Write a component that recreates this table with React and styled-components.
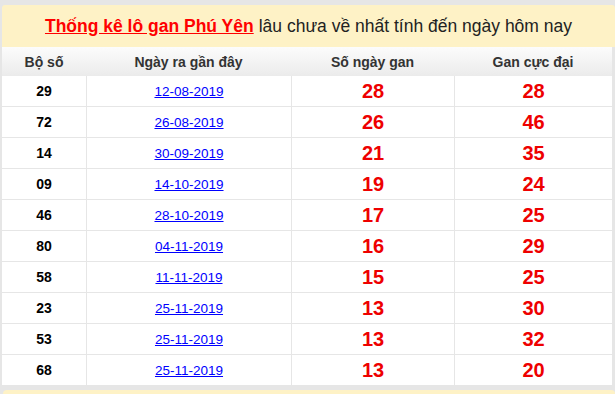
import React from 'react';
import styled, { createGlobalStyle } from 'styled-components';

const GlobalStyle = createGlobalStyle`
  html, body {
    margin: 0;
    padding: 0;
    background: #e6e6e6;
    font-family: "Liberation Sans", Arial, sans-serif;
  }
`;

const Page = styled.div`
  padding: 5px 0 0 2px;
  display: flex;
  flex-direction: column;
  gap: 4px;
`;

const Section = styled.div`
  width: 613px;
`;

const TitleBar = styled.h2`
  margin: 0;
  height: 42px;
  display: flex;
  align-items: center;
  justify-content: center;
  background: #fef2c6;
  border-radius: 3px 3px 0 0;
  font-size: 17.5px;
  font-weight: normal;
  color: #222;
  white-space: nowrap;
`;

const TitleLink = styled.a`
  color: #ff0000;
  font-weight: bold;
  text-decoration: underline;
  margin-right: 5px;
`;

const Table = styled.div`
  width: 610px;
  background: #fff;
`;

const Row = styled.div`
  display: grid;
  grid-template-columns: 84px 205px 163px 158px;
  height: ${p => (p.$head ? '29px' : '30px')};
  border-bottom: ${p => (p.$head ? 'none' : '1px solid #e6e6e6')};
  background: ${p => (p.$head ? 'linear-gradient(#fcfcfc, #ebebeb)' : '#fff')};
`;

const Cell = styled.div`
  box-sizing: border-box;
  display: flex;
  align-items: center;
  justify-content: center;
  border-left: ${p => (p.$first || p.$head ? 'none' : '1px solid #e6e6e6')};
`;

const HeadText = styled.span`
  font-size: 14px;
  font-weight: bold;
  color: #333;
`;

const Pair = styled.span`
  font-size: 14px;
  font-weight: bold;
  color: #000;
`;

const DateLink = styled.a`
  font-size: 13.5px;
  color: #0000ff;
  text-decoration: underline;
`;

const Count = styled.span`
  font-size: 20px;
  font-weight: bold;
  color: #ee0000;
`;

const NextBar = styled.div`
  width: 612px;
  margin-left: 1px;
  height: 20px;
  background: #fef2c6;
  border-radius: 4px 4px 0 0;
`;

const rows = [
  ['29', '12-08-2019', 28, 28],
  ['72', '26-08-2019', 26, 46],
  ['14', '30-09-2019', 21, 35],
  ['09', '14-10-2019', 19, 24],
  ['46', '28-10-2019', 17, 25],
  ['80', '04-11-2019', 16, 29],
  ['58', '11-11-2019', 15, 25],
  ['23', '25-11-2019', 13, 30],
  ['53', '25-11-2019', 13, 32],
  ['68', '25-11-2019', 13, 20],
];

const headers = ['Bộ số', 'Ngày ra gần đây', 'Số ngày gan', 'Gan cực đại'];

export default function App() {
  return (
    <Page>
      <GlobalStyle />
      <Section>
        <TitleBar>
          <TitleLink href="#">Thống kê lô gan Phú Yên</TitleLink>
          lâu chưa về nhất tính đến ngày hôm nay
        </TitleBar>
        <Table>
          <Row $head>
            {headers.map(h => (
              <Cell key={h} $head>
                <HeadText>{h}</HeadText>
              </Cell>
            ))}
          </Row>
          {rows.map(([pair, date, gan, max]) => (
            <Row key={pair}>
              <Cell $first>
                <Pair>{pair}</Pair>
              </Cell>
              <Cell>
                <DateLink href="#">{date}</DateLink>
              </Cell>
              <Cell>
                <Count>{gan}</Count>
              </Cell>
              <Cell>
                <Count>{max}</Count>
              </Cell>
            </Row>
          ))}
        </Table>
      </Section>
      <NextBar />
    </Page>
  );
}
